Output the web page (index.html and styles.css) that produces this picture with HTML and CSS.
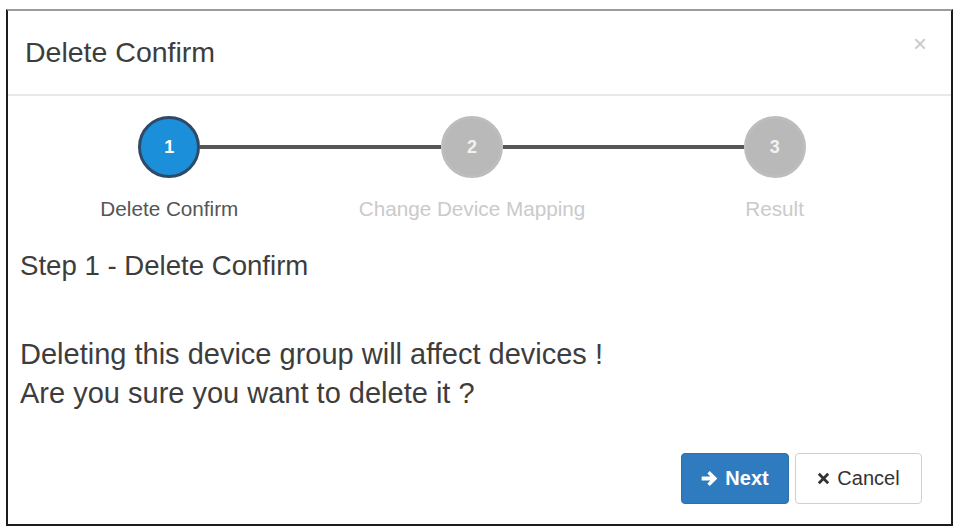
FILE: index.html
```html
<!DOCTYPE html>
<html lang="en">
<head>
  <meta charset="UTF-8" />
  <title>Delete Confirm</title>
  <link rel="stylesheet" href="styles.css">
</head>
<body>
  <div class="modal" role="dialog" aria-labelledby="modalTitle">
    <div class="modal-header">
      <h4 id="modalTitle" class="modal-title">Delete Confirm</h4>
      <button class="close" aria-label="Close">&times;</button>
    </div>

    <div class="modal-body">
      <ol class="steps">
        <li class="step active">
          <div class="track">
            <span class="bar"></span>
            <span class="dot">1</span>
            <span class="bar"></span>
          </div>
          <span class="step-label">Delete Confirm</span>
        </li>
        <li class="step">
          <div class="track">
            <span class="bar"></span>
            <span class="dot">2</span>
            <span class="bar"></span>
          </div>
          <span class="step-label">Change Device Mapping</span>
        </li>
        <li class="step">
          <div class="track">
            <span class="bar"></span>
            <span class="dot">3</span>
            <span class="bar"></span>
          </div>
          <span class="step-label">Result</span>
        </li>
      </ol>

      <h3 class="step-title">Step 1 - Delete Confirm</h3>
      <p class="message">
        Deleting this device group will affect devices !<br>
        Are you sure you want to delete it ?
      </p>
    </div>

    <div class="modal-footer">
      <button class="btn btn-primary">
        <svg class="icon" viewBox="0 0 16 16" aria-hidden="true">
          <path d="M8.2 1 L15.4 8 L8.2 15 L6 12.8 L8.9 9.8 H0.6 V6.2 H8.9 L6 3.2 Z" fill="currentColor"/>
        </svg>
        Next
      </button>
      <button class="btn btn-default">
        <svg class="icon icon-x" viewBox="0 0 16 16" aria-hidden="true">
          <path d="M3.4 1 L8 5.6 L12.6 1 L15 3.4 L10.4 8 L15 12.6 L12.6 15 L8 10.4 L3.4 15 L1 12.6 L5.6 8 L1 3.4 Z" fill="currentColor"/>
        </svg>
        Cancel
      </button>
    </div>
  </div>
</body>
</html>
```

FILE: styles.css
```css
* {
  box-sizing: border-box;
}
body {
  margin: 0;
  background: #fff;
  font-family: "Liberation Sans", Arial, sans-serif;
  color: #333;
}
.modal {
  margin: 9px 3px 0 6px;
  height: 517px;
  border: 2px solid #1c1c1c;
  border-top-color: #9c9c9c;
  background: #fff;
  display: flex;
  flex-direction: column;
}

/* Cabecera */
.modal-header {
  height: 85px;
  display: flex;
  justify-content: space-between;
  align-items: flex-start;
  padding: 0 24px 0 17px;
  border-bottom: 2px solid #e8e8e8;
}
.modal-title {
  margin: 24px 0 0;
  font-size: 28.5px;
  font-weight: normal;
  line-height: 34px;
  color: #3d3d3d;
}
.close {
  margin-top: 20px;
  padding: 0;
  border: none;
  background: none;
  font-family: "Liberation Sans", Arial, sans-serif;
  font-size: 24px;
  line-height: 26px;
  color: #c9c9c9;
  cursor: pointer;
}

/* Cuerpo */
.modal-body {
  padding: 20px 12px 0;
}
.steps {
  list-style: none;
  margin: 0 13px 0 -2px;
  padding: 0;
  display: grid;
  grid-template-columns: repeat(3, 1fr);
}
.step {
  display: flex;
  flex-direction: column;
  align-items: center;
}
.track {
  width: 100%;
  display: flex;
  align-items: center;
}
.bar {
  flex: 1;
  height: 4px;
  background: #575757;
}
.step:first-child .bar:first-child,
.step:last-child .bar:last-child {
  background: transparent;
}
.dot {
  width: 62px;
  height: 62px;
  border-radius: 50%;
  border: 3px solid #bdbdbd;
  background: #b9b9b9;
  color: #f2f2f2;
  font-size: 18px;
  font-weight: bold;
  display: flex;
  align-items: center;
  justify-content: center;
}
.step.active .dot {
  background: #1b8fd9;
  border-color: #2f4a66;
  color: #fff;
}
.step-label {
  margin-top: 19px;
  font-size: 20.7px;
  line-height: 24px;
  color: #cacaca;
}
.step.active .step-label {
  color: #555;
}
.step-title {
  margin: 29px 0 0;
  font-size: 27.6px;
  font-weight: normal;
  line-height: 32px;
  color: #3d3d3d;
}
.message {
  margin: 53px 0 0;
  font-size: 29px;
  line-height: 39px;
  color: #3d3d3d;
}

/* Pie */
.modal-footer {
  margin-top: auto;
  padding: 0 29px 20px;
  display: flex;
  justify-content: flex-end;
  gap: 6px;
}
.btn {
  height: 51px;
  padding: 0;
  border-radius: 4px;
  font-family: "Liberation Sans", Arial, sans-serif;
  font-size: 20px;
  display: flex;
  align-items: center;
  justify-content: center;
  gap: 7px;
  cursor: pointer;
}
.btn-primary {
  width: 108px;
  background: #2f7bbf;
  border: 1px solid #2c6fa8;
  color: #fff;
  font-weight: bold;
}
.btn-default {
  width: 127px;
  background: #fff;
  border: 1px solid #cfcfcf;
  color: #333;
}
.icon {
  width: 17px;
  height: 17px;
}
.icon-x {
  width: 13px;
  height: 13px;
}
```
